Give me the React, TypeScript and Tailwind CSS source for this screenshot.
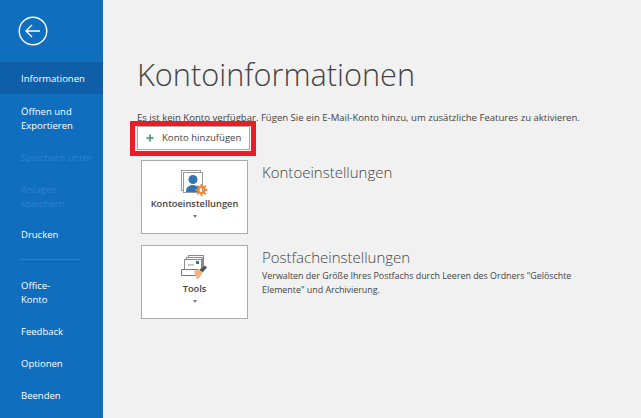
const font = "font-['Open_Sans','Noto_Sans',sans-serif]";

function BackIcon() {
  return (
    <svg width="30" height="30" viewBox="0 0 30 30" fill="none" stroke="white">
      <circle cx="15" cy="15" r="13.75" strokeWidth="1.4" />
      <path d="M8 15H22M14 9L8 15L14 21" strokeWidth="1.4" />
    </svg>
  );
}

function AccountIcon() {
  return (
    <svg width="27" height="26" viewBox="0 0 27 26">
      <rect x="0.5" y="0.5" width="19" height="20" fill="#fff" stroke="#9a9a9a" />
      <rect x="2.5" y="2.5" width="19" height="20" fill="#fff" stroke="#9a9a9a" />
      <circle cx="12" cy="9.5" r="4.5" fill="#2f75b5" />
      <path d="M5 22C5 17 8 15 12 15C14 15 16 16 17 17V22Z" fill="#2f75b5" />
      <circle cx="20.5" cy="20" r="3.2" fill="none" stroke="#ed8b33" strokeWidth="2.4" />
      <path d="M20.5 14V16M20.5 24V26M14.5 20H16.5M24.5 20H26.5M16.2 15.7L17.6 17.1M23.4 22.9L24.8 24.3M16.2 24.3L17.6 22.9M23.4 17.1L24.8 15.7" stroke="#ed8b33" strokeWidth="1.8" />
    </svg>
  );
}

function ToolsIcon() {
  return (
    <svg width="27" height="26" viewBox="0 0 27 26">
      <rect x="7.5" y="0.5" width="15" height="12" fill="#fff" stroke="#8a8a8a" />
      <rect x="5.5" y="2.5" width="16" height="12" fill="#fff" stroke="#8a8a8a" />
      <rect x="3.5" y="4.5" width="17" height="11" fill="#fff" stroke="#8a8a8a" />
      <rect x="15" y="6" width="3" height="3" fill="#2f75b5" />
      <path d="M7 10H13" stroke="#c9c9c9" strokeWidth="2" />
      <path d="M0.5 14.5H17V20.5H0.5Z" fill="#fff" stroke="#777" />
      <path d="M13 16L18 14L21.5 18C20 21 18.5 23 16 24.5Z" fill="#f2b47a" />
      <path d="M18.5 14.5L24 10.5L26 12.5L21.5 17.5Z" fill="#555" />
    </svg>
  );
}

function PlusIcon() {
  return (
    <svg width="8" height="8" viewBox="0 0 8 8">
      <path d="M3 0.5H5V3H7.5V5H5V7.5H3V5H0.5V3H3Z" fill="#5fa38a" />
    </svg>
  );
}

function Caret() {
  return <div className="h-0 w-0 border-x-[2.5px] border-t-[3px] border-x-transparent border-t-[#777]" />;
}

function NavItem({ label, muted, active }: { label: React.ReactNode; muted?: boolean; active?: boolean }) {
  return (
    <div
      className={`flex items-center pl-[21px] text-[9.5px] leading-[14px] ${active ? "h-[32px] bg-[#0f5ea8] pt-px" : ""} ${
        muted ? "text-[#2b83d3]" : "text-white"
      }`}
    >
      <span>{label}</span>
    </div>
  );
}

function ActionCard({ icon, label }: { icon: React.ReactNode; label: string }) {
  return (
    <div className="flex h-[74px] w-[107px] flex-col items-center border border-[#ababab] bg-white pt-[9px]">
      {icon}
      <div className="mt-px text-[9.3px] leading-[14px] font-semibold text-[#444]">{label}</div>
      <div className="mt-[4px]">
        <Caret />
      </div>
    </div>
  );
}

export default function App() {
  return (
    <div className={`${font} flex h-[418px] w-[641px] overflow-hidden bg-[#f1f1f1]`}>
      {/* Backstage nav */}
      <div className="flex w-[103px] shrink-0 flex-col bg-[#106ebe]">
        <div className="pt-[16px] pl-[18px]">
          <BackIcon />
        </div>
        <div className="mt-[16px]">
          <NavItem label="Informationen" active />
        </div>
        <div className="mt-[11px]">
          <NavItem
            label={
              <>
                Öffnen und
                <br />
                Exportieren
              </>
            }
          />
        </div>
        <div className="mt-[18px]">
          <NavItem label="Speichern unter" muted />
        </div>
        <div className="mt-[18px]">
          <NavItem
            label={
              <>
                Anlagen
                <br />
                speichern
              </>
            }
            muted
          />
        </div>
        <div className="mt-[17px]">
          <NavItem label="Drucken" />
        </div>
        <div className="mt-[17px] ml-[21px] h-px w-[60px] bg-[#2b83d3]" />
        <div className="mt-[19px]">
          <NavItem
            label={
              <>
                Office-
                <br />
                Konto
              </>
            }
          />
        </div>
        <div className="mt-[18px]">
          <NavItem label="Feedback" />
        </div>
        <div className="mt-[18px]">
          <NavItem label="Optionen" />
        </div>
        <div className="mt-[18px]">
          <NavItem label="Beenden" />
        </div>
      </div>

      {/* Content */}
      <div className="flex-1 pt-[52px] pl-[34px]">
        <h1 className="text-[30.7px] leading-[44px] font-light text-[#444]">Kontoinformationen</h1>
        <p className="mt-[15px] text-[9.57px] leading-[14px] whitespace-nowrap text-[#444]">
          Es ist kein Konto verfügbar. Fügen Sie ein E-Mail-Konto hinzu, um zusätzliche Features zu aktivieren.
        </p>
        <div className="relative mt-[-4px] -ml-[7px] w-fit border-[5px] border-[#ed1c24] pr-px pb-px pl-[2px]">
          <div className="flex h-[24px] w-[113px] items-center border border-[#ababab] bg-white pl-[8px] text-[9.6px] text-[#444]">
            <PlusIcon />
            <span className="ml-[8px]">Konto hinzufügen</span>
          </div>
        </div>
        <div className="mt-[4px] ml-[4px] flex gap-[14px]">
          <ActionCard icon={<AccountIcon />} label="Kontoeinstellungen" />
          <div className="pt-px text-[15px] leading-[22px] font-light text-[#444]">Kontoeinstellungen</div>
        </div>
        <div className="mt-[11px] ml-[4px] flex gap-[14px]">
          <ActionCard icon={<ToolsIcon />} label="Tools" />
          <div>
            <div className="pt-px text-[15px] leading-[22px] font-light text-[#444]">Postfacheinstellungen</div>
            <p className="mt-px w-[320px] text-[8.9px] leading-[14px] text-[#444]">
              Verwalten der Größe Ihres Postfachs durch Leeren des Ordners "Gelöschte Elemente" und Archivierung.
            </p>
          </div>
        </div>
      </div>
    </div>
  );
}
